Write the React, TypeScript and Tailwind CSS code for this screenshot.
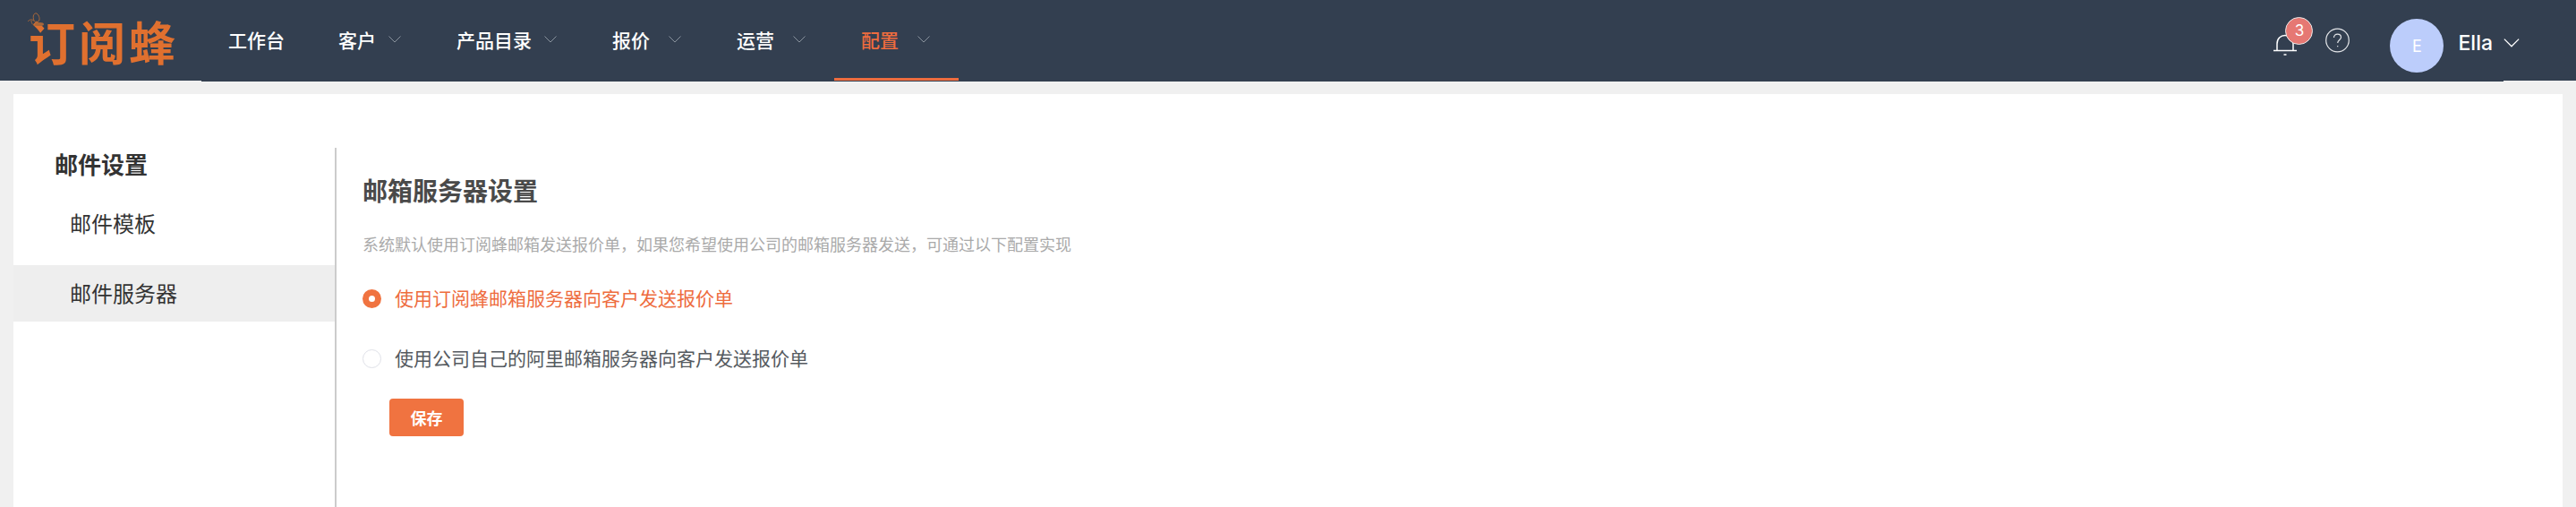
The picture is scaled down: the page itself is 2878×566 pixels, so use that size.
const cjk = "font-['Noto_Sans_CJK_SC','Liberation_Sans',sans-serif]";

const navItems = [
    { label: '工作台', arrow: false, active: false, gap: 'gap-0' },
    { label: '客户', arrow: true, active: false, gap: 'gap-[14px]' },
    { label: '产品目录', arrow: true, active: false, gap: 'gap-[14px]' },
    { label: '报价', arrow: true, active: false, gap: 'gap-[21px]' },
    { label: '运营', arrow: true, active: false, gap: 'gap-[21px]' },
    { label: '配置', arrow: true, active: true, gap: 'gap-[21px]' },
];

function Chevron({ className }: { className: string }) {
    return (
        <svg viewBox="0 0 14 8" fill="none" stroke="currentColor" strokeWidth="1" className={className}>
            <path d="M0.5 0.5 L7 7 L13.5 0.5" />
        </svg>
    );
}

function Logo() {
    return (
        <div className="relative w-[225px] pl-[32px] pt-[11px]">
            <svg viewBox="0 0 20 18" fill="none" stroke="#a8673a" strokeWidth="1" className="absolute left-[30px] top-[14px] w-[20px] h-[18px]">
                <path d="M8 9 C6 4 8 0 11 1 C14 3 15 8 13 10 C10 11 8 10 8 9 Z" />
                <path d="M8 9 C5 7 3 8 1 10 M5 9 C5 13 8 15 11 14" />
                <ellipse cx="14" cy="13" rx="5" ry="2" fill="#a8673a" stroke="none" />
            </svg>
            <span className="block text-[52px] leading-[70px] font-bold tracking-[4px] text-[#e0702f]">订阅蜂</span>
        </div>
    );
}

function Bell() {
    return (
        <div className="relative w-[26px] h-[25px] mt-[37px]">
            <svg viewBox="0 0 26 25" fill="none" stroke="#ffffff" strokeWidth="1.5" className="w-[26px] h-[25px]">
                <path d="M4 19.5 V12 C4 6 8 2.5 13 2.5 C18 2.5 22 6 22 12 V19.5" />
                <path d="M0 19.5 H26" />
                <path d="M11.5 24 H14.5" />
            </svg>
            <span className="absolute left-[13px] -top-[18px] w-[31px] h-[31px] rounded-full bg-[#e67873] border border-[#e8e8e8] flex items-center justify-center text-white text-[17px] font-['Inter',sans-serif]">
                3
            </span>
        </div>
    );
}

function Help() {
    return (
        <svg viewBox="0 0 27 27" fill="none" stroke="#e4e6e9" strokeWidth="1.2" className="w-[27px] h-[28px] ml-[32px] mt-[31px]">
            <circle cx="13.5" cy="13.5" r="12.8" />
            <path d="M9.5 10.5 C9.5 8 11.3 6.6 13.5 6.6 C15.8 6.6 17.5 8.2 17.5 10.2 C17.5 12.8 13.7 13.2 13.7 16.5" />
            <path d="M13.7 19.5 V20.8" />
        </svg>
    );
}

function Header() {
    return (
        <header className="flex h-[90px] bg-[#333f50]">
            <Logo />
            <nav className="flex-1 flex h-[91px] bg-[#333f50]">
                {navItems.map((item) => (
                    <div
                        key={item.label}
                        className={`flex items-center h-[90px] pl-[30px] ${item.arrow ? 'pr-[32px]' : 'pr-[30px]'} ${item.gap} border-b-[3px] ${item.active ? 'border-[#ee6c3e]' : 'border-transparent'}`}
                    >
                        <span className={`text-[21px] leading-[28px] font-medium ${item.active ? 'text-[#ee6c3e]' : 'text-white'}`}>{item.label}</span>
                        {item.arrow && <Chevron className="w-[14px] h-[8px] text-[#8a939e]" />}
                    </div>
                ))}
                <div className="flex-1 flex items-start justify-end h-[90px] pr-[12px]">
                    <Bell />
                    <Help />
                    <div className="w-[60px] h-[60px] ml-[45px] mt-[21px] rounded-full bg-[#bccdfb] flex items-center justify-center text-white text-[18px] font-['Inter',sans-serif]">
                        E
                    </div>
                    <span className="ml-[16px] mt-[33px] text-white text-[23px] leading-[30px] font-medium font-['Inter',sans-serif]">Ella</span>
                </div>
            </nav>
            <div className="w-[81px] flex items-center pt-[6px]">
                <Chevron className="w-[18px] h-[10px] text-white" />
            </div>
        </header>
    );
}

function Sidebar() {
    return (
        <aside className="w-[361px] border-r-2 border-[#cccccc] flex flex-col gap-[15px]">
            <h2 className="h-[38px] pl-[46px] -mt-[1px] mb-[1px] text-[26px] leading-[38px] font-bold text-[#333333]">邮件设置</h2>
            <div className="h-[63px] pl-[63px] pb-[2px] flex items-center text-[24px] text-[#333333]">邮件模板</div>
            <div className="h-[63px] pl-[63px] pb-[2px] flex items-center text-[24px] text-[#333333] bg-[#eeeeee]">邮件服务器</div>
        </aside>
    );
}

function Radio({ label, checked }: { label: string; checked: boolean }) {
    return (
        <label className="flex items-center gap-[15px] h-[24px]">
            {checked ? (
                <span className="w-[21px] h-[21px] rounded-full bg-[#f07340] flex items-center justify-center">
                    <span className="w-[7px] h-[7px] rounded-full bg-white" />
                </span>
            ) : (
                <span className="w-[21px] h-[21px] rounded-full bg-white border border-[#dfe1e8]" />
            )}
            <span className={`text-[21px] leading-[24px] -mt-[2px] ${checked ? 'text-[#ee6c3e]' : 'text-[#555a60]'}`}>{label}</span>
        </label>
    );
}

export default function App() {
    return (
        <div className={`h-[566px] overflow-hidden bg-[#f0f0f0] ${cjk}`}>
            <Header />
            <div className="flex h-[461px] mx-[15px] mt-[15px] pt-[60px] bg-white">
                <Sidebar />
                <main className="pl-[29px]">
                    <h1 className="mt-[27px] text-[28px] leading-[40px] font-bold text-[#4a4a4a]">邮箱服务器设置</h1>
                    <p className="mt-[28px] text-[18px] leading-[24px] text-[#aaaaaa]">
                        系统默认使用订阅蜂邮箱发送报价单，如果您希望使用公司的邮箱服务器发送，可通过以下配置实现
                    </p>
                    <div className="mt-[37px] flex flex-col gap-[43px]">
                        <Radio label="使用订阅蜂邮箱服务器向客户发送报价单" checked />
                        <Radio label="使用公司自己的阿里邮箱服务器向客户发送报价单" checked={false} />
                    </div>
                    <button className="mt-[33px] ml-[30px] w-[83px] h-[42px] rounded-[4px] bg-[#f07340] text-white text-[18px] font-bold flex items-center justify-center">
                        保存
                    </button>
                </main>
            </div>
        </div>
    );
}
